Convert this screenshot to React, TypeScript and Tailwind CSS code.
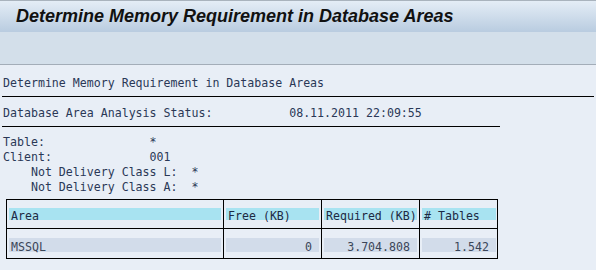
import React from 'react'

const mono = { fontFamily: '"DejaVu Sans Mono", "Liberation Mono", monospace' }

const cols = [
  { label: 'Area', value: 'MSSQL', w: 'w-[217px]', right: false },
  { label: 'Free (KB)', value: '0', w: 'w-[98px]', right: true },
  { label: 'Required (KB)', value: '3.704.808', w: 'w-[98px]', right: true },
  { label: '# Tables', value: '1.542', w: 'w-[78px]', right: true },
]

function Line({ children }: { children: React.ReactNode }) {
  return <div className="h-[15px] leading-[19px] whitespace-pre">{children}</div>
}

export default function App() {
  return (
    <div className="w-[596px] h-[270px] overflow-hidden bg-[#e8eef6]">
      {/* title bar */}
      <div className="h-[32px] border-t border-[#a9b3bd] bg-gradient-to-b from-[#e4edf6] to-[#b9cce0] pl-[16px] flex items-center">
        <h1
          className="text-[18px] font-bold italic text-[#111]"
          style={{ fontFamily: '"Liberation Sans", Arial, sans-serif' }}
        >
          Determine Memory Requirement in Database Areas
        </h1>
      </div>
      {/* toolbar */}
      <div className="h-[33px] bg-[#d3dfea] border-b border-[#a3adb8]" />

      <div className="px-[2px] text-[11.6px] text-[#2a3856]" style={mono}>
        <div className="pt-[9px] pl-[1px]">
          <Line>Determine Memory Requirement in Database Areas</Line>
        </div>
        <div className="mt-[7px] h-px bg-black" />
        <div className="mt-[7px] pl-[1px]">
          <Line>{'Database Area Analysis Status:           08.11.2011 22:09:55'}</Line>
        </div>
        <div className="mt-[7px] h-px w-[498px] bg-black" />
        <div className="mt-[6px] pl-[1px]">
          <Line>{'Table:               *'}</Line>
          <Line>{'Client:              001'}</Line>
          <Line>{'    Not Delivery Class L:  *'}</Line>
          <Line>{'    Not Delivery Class A:  *'}</Line>
        </div>

        <div className="mt-[6px] ml-[4px] w-[492px] border border-black">
          <div className="flex h-[29px] border-b border-black">
            {cols.map((c, i) => (
              <div
                key={c.label}
                className={`${c.w} shrink-0 px-[2px] pt-[8px] ${i < cols.length - 1 ? 'border-r border-black' : ''}`}
              >
                <div className="h-[12px] leading-[17px] bg-[#a8e3f1] pl-[2px] whitespace-pre text-[#1d2a44]">
                  {c.label}
                </div>
              </div>
            ))}
          </div>
          <div className="flex h-[29px]">
            {cols.map((c, i) => (
              <div
                key={c.label}
                className={`${c.w} shrink-0 px-[2px] pt-[9px] ${i < cols.length - 1 ? 'border-r border-black' : ''}`}
              >
                <div
                  className={`h-[14px] leading-[18px] bg-[#d2dcea] text-[#3b4658] ${
                    c.right ? 'text-right pr-[7px]' : 'pl-[2px]'
                  }`}
                >
                  {c.value}
                </div>
              </div>
            ))}
          </div>
        </div>
      </div>
    </div>
  )
}
